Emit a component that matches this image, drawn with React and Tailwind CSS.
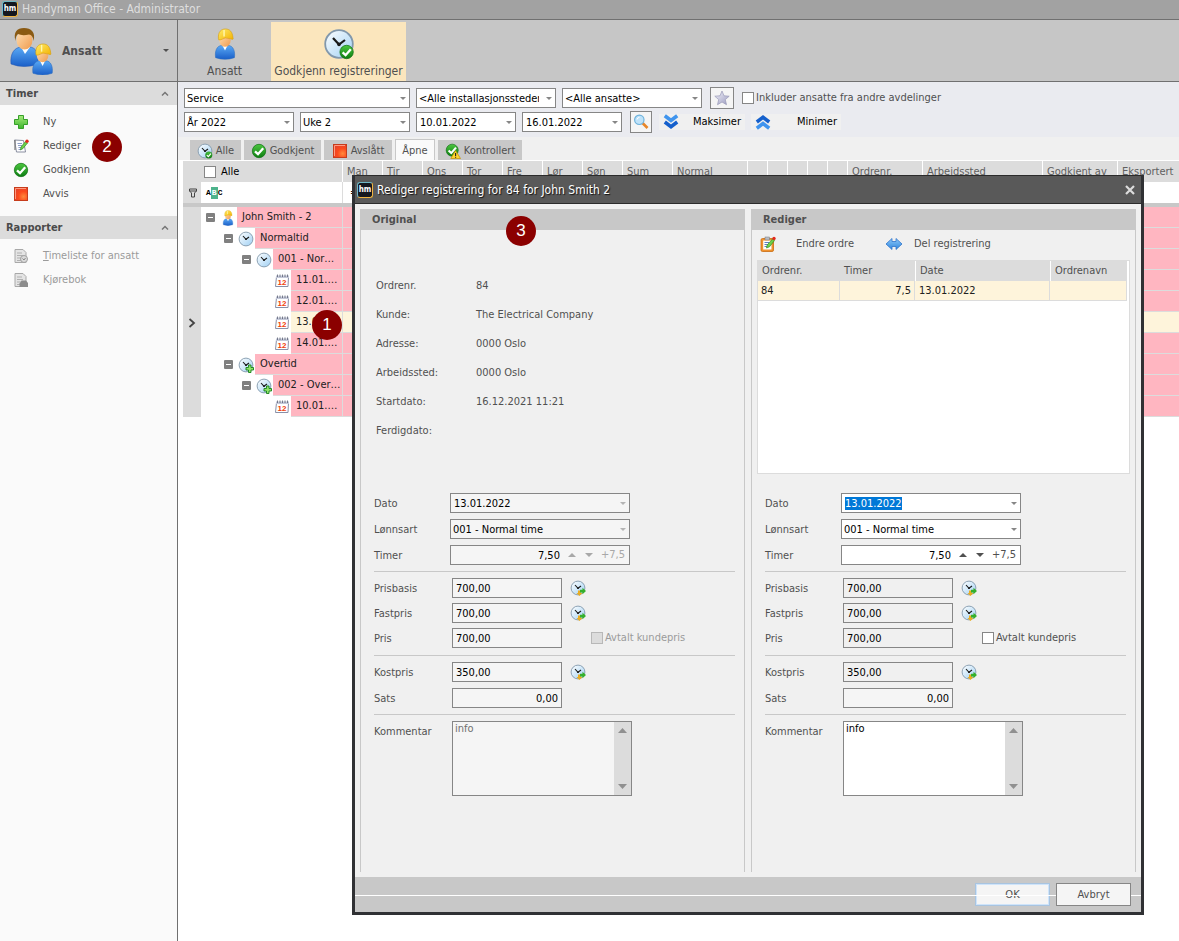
import { useEffect, useRef } from "react";
import clsx from "clsx";

const columns = [
  { label: "Man", width: "w-[40px]", filter: "=" },
  { label: "Tir", width: "w-[40px]" },
  { label: "Ons", width: "w-[40px]" },
  { label: "Tor", width: "w-[40px]" },
  { label: "Fre", width: "w-[40px]" },
  { label: "Lør", width: "w-[40px]" },
  { label: "Søn", width: "w-[40px]" },
  { label: "Sum", width: "w-[50px]" },
  { label: "Normal", width: "w-[75px]" },
  { label: "", width: "w-[20px]" },
  { label: "", width: "w-[20px]" },
  { label: "", width: "w-[20px]" },
  { label: "", width: "w-[20px]" },
  { label: "", width: "w-[20px]" },
  { label: "Ordrenr.", width: "w-[75px]" },
  { label: "Arbeidssted", width: "w-[120px]" },
  { label: "Godkjent av", width: "w-[75px]" },
  { label: "Eksportert", width: "" },
];

const treeRows = [
  { level: 0, icon: "worker", label: "John Smith - 2" },
  { level: 1, icon: "clock", label: "Normaltid" },
  { level: 2, icon: "clock", label: "001 - Nor…" },
  { level: 3, icon: "calendar", label: "11.01.…" },
  { level: 3, icon: "calendar", label: "12.01.…" },
  { level: 3, icon: "calendar", label: "13.01.…", selected: true },
  { level: 3, icon: "calendar", label: "14.01.…" },
  { level: 1, icon: "clockPlus", label: "Overtid" },
  { level: 2, icon: "clockPlus", label: "002 - Over…" },
  { level: 3, icon: "calendar", label: "10.01.…" },
];

const indents = ["pl-0", "pl-[18px]", "pl-[36px]", "pl-[54px]"];

const orderInfo = [
  ["Ordrenr.", "84"],
  ["Kunde:", "The Electrical Company"],
  ["Adresse:", "0000 Oslo"],
  ["Arbeidssted:", "0000 Oslo"],
  ["Startdato:", "16.12.2021 11:21"],
  ["Ferdigdato:", ""],
];

/* ---------- icons ---------- */

function IconDefs() {
  return (
    <svg className="absolute h-0 w-0" aria-hidden="true">
      <defs>
        <linearGradient id="gBlue" x1="0" y1="0" x2="0" y2="1">
          <stop offset="0" stopColor="#5aa9f5" />
          <stop offset="1" stopColor="#1a5fc8" />
        </linearGradient>
        <linearGradient id="gArrow" x1="0" y1="0" x2="0" y2="1">
          <stop offset="0" stopColor="#8cc8fa" />
          <stop offset="1" stopColor="#2f86dc" />
        </linearGradient>
        <linearGradient id="gSkin" x1="0" y1="0" x2="1" y2="1">
          <stop offset="0" stopColor="#ffe0b4" />
          <stop offset="1" stopColor="#ef9a4c" />
        </linearGradient>
        <linearGradient id="gHelmet" x1="0" y1="0" x2="1" y2="1">
          <stop offset="0" stopColor="#ffec6a" />
          <stop offset="1" stopColor="#f2b100" />
        </linearGradient>
        <linearGradient id="gDial" x1="0" y1="0" x2="1" y2="1">
          <stop offset="0" stopColor="#ffffff" />
          <stop offset="1" stopColor="#9fd0f4" />
        </linearGradient>
        <linearGradient id="gGreen" x1="0" y1="0" x2="0" y2="1">
          <stop offset="0" stopColor="#4cc73f" />
          <stop offset="1" stopColor="#0d7d12" />
        </linearGradient>
        <linearGradient id="gPlus" x1="0" y1="0" x2="0" y2="1">
          <stop offset="0" stopColor="#a6ec7c" />
          <stop offset="1" stopColor="#3db52c" />
        </linearGradient>
        <radialGradient id="gRed" cx="0.7" cy="0.7" r="0.8">
          <stop offset="0" stopColor="#ff8a3c" />
          <stop offset="0.5" stopColor="#fb4a1c" />
          <stop offset="1" stopColor="#e4412a" />
        </radialGradient>
        <linearGradient id="gStar" x1="0" y1="0" x2="1" y2="1">
          <stop offset="0" stopColor="#f4f4fa" />
          <stop offset="1" stopColor="#9a9ac0" />
        </linearGradient>
      </defs>
    </svg>
  );
}

function Icon({ size = "size-4", box = "0 0 16 16", children }) {
  return (
    <svg viewBox={box} className={clsx("shrink-0", size)} fill="none" aria-hidden="true">
      {children}
    </svg>
  );
}

function WorkerShape() {
  return (
    <>
      <path d="M1 31.500C0 25 2 18.500 8 18.500L11 20.500L14 18.500C20 18.500 22 25 21 31.500Q11 35 1 31.500Z" fill="url(#gBlue)" stroke="#2a6cc0" strokeWidth=".6" />
      <path d="M8 18L11 24L14 18Z" fill="#fff" />
      <ellipse cx="11" cy="13" rx="6" ry="7" fill="url(#gSkin)" />
      <path d="M4 11C3.500 4 7 1 11.500 1S19 4 19.500 10.500Q20.500 13 17 11.500Q11 9 6.500 12.500Q3.500 13.500 4 11Z" fill="url(#gHelmet)" stroke="#d79b00" strokeWidth=".6" />
      <path d="M10 2V9" stroke="#fff7b0" strokeWidth="1.500" />
    </>
  );
}

function WorkerIcon({ size }) {
  return <Icon size={size} box="-1 0 24 34"><WorkerShape /></Icon>;
}

function PeopleIcon() {
  return (
    <Icon size="h-[48px] w-[44px]" box="0 0 44 48">
      <path d="M1 37C0 27 4 20 12 20L15 23L19 20C27 20 29 28 28 37Q14 42 1 37Z" fill="url(#gBlue)" stroke="#2458b4" strokeWidth=".6" />
      <path d="M11 20L15 27L20 20Z" fill="#fff" />
      <ellipse cx="14.500" cy="13" rx="8" ry="9.500" fill="url(#gSkin)" />
      <path d="M5.500 14C3 5 7 1 14 1S26 5 23.500 14Q23 8 19 7.500Q12 9 8 7Q5.500 9 5.500 14Z" fill="#8a5a12" />
      <g transform="translate(22 16) scale(.96)"><WorkerShape /></g>
    </Icon>
  );
}

function CheckShape() {
  return (
    <>
      <circle cx="8" cy="8" r="6.700" fill="url(#gGreen)" stroke="#0b6d10" strokeWidth=".7" />
      <path d="M4 8.300L7 11.200L12.200 5.200" stroke="#fff" strokeWidth="2.300" />
    </>
  );
}

function CheckIcon({ size }) {
  return <Icon size={size}><CheckShape /></Icon>;
}

function ClockShape() {
  return (
    <>
      <circle cx="8" cy="8" r="6.900" fill="url(#gDial)" stroke="#8298ac" strokeWidth=".9" />
      <path d="M5 5L8 8.300L11 6" stroke="#1a1a1a" strokeWidth="1.100" />
      <circle cx="8" cy="8.200" r=".9" fill="#1a1a1a" />
    </>
  );
}

function ClockIcon({ size, badge }) {
  return (
    <Icon size={size}>
      <ClockShape />
      {badge === "check" && <g transform="translate(7.800 8) scale(.5)"><CheckShape /></g>}
      {badge === "plus" && <path d="M10.500 8H13V10.500H15.500V13H13V15.500H10.500V13H8V10.500H10.500Z" fill="#8fe36a" stroke="#15801a" strokeWidth=".9" />}
      {badge === "arrow" && (
        <>
          <path d="M8 10.500H10.800V13H12.500L9.400 16L6.500 13H8Z" fill="#e9ad22" />
          <path d="M10 9.800H12.500V7.800L16 11L12.500 14.200V12.500H10Z" fill="#35b02c" />
        </>
      )}
    </Icon>
  );
}

function RedSquareIcon() {
  return (
    <Icon>
      <rect x="1.500" y="1.500" width="13" height="13" fill="url(#gRed)" stroke="#c63c1c" />
      <path d="M2.500 13V2.500H13" stroke="#ff9a80" />
    </Icon>
  );
}

function PlusIcon() {
  return (
    <Icon>
      <path d="M5.500 1.500H10.500V5.500H14.500V10.500H10.500V14.500H5.500V10.500H1.500V5.500H5.500Z" fill="url(#gPlus)" stroke="#36a02a" />
    </Icon>
  );
}

function EditIcon() {
  return (
    <Icon>
      <path d="M1.500 2L10.500 2.500L12.500 14H3.500Z" fill="#fdfdff" stroke="#8a8fa0" />
      <path d="M2 2V12" stroke="#777" strokeWidth="1.200" />
      <path d="M4.500 5.500H9M5 7.500H9M5.500 9.500H8M5.500 11.500H8" stroke="#6d84b8" strokeWidth=".8" />
      <path d="M7.500 12L8 9L12.500 3.500L14.500 5L10 10.500Z" fill="#6fd04a" stroke="#2f8f22" strokeWidth=".7" />
      <circle cx="14" cy="3.200" r="1.700" fill="#e22a1c" />
    </Icon>
  );
}

function ClipboardIcon() {
  return (
    <Icon>
      <rect x="1" y="2.500" width="12.500" height="13" rx="1.500" fill="#f0922e" stroke="#c96c10" strokeWidth=".8" />
      <path d="M3.200 4.500H11.500V13.500H3.200Z" fill="#fff" />
      <rect x="5" y="1" width="4.500" height="3" fill="#b9bcc4" stroke="#777" strokeWidth=".5" />
      <path d="M4.500 6.500H9M4.500 8.500H8M4.500 10.500H7" stroke="#5f7fc0" />
      <path d="M6.500 12L7.200 9L12.500 3L14.500 4.500L9.500 10.800Z" fill="#6fd04a" stroke="#2f8f22" strokeWidth=".7" />
      <circle cx="14" cy="2.500" r="1.700" fill="#e22a1c" />
    </Icon>
  );
}

function SplitIcon() {
  return (
    <Icon>
      <path d="M0 8L6 2.500V5.500H10V2.500L16 8L10 13.500V10.500H6V13.500Z" fill="url(#gArrow)" stroke="#2f74cc" strokeWidth=".8" />
    </Icon>
  );
}

function CalendarIcon() {
  return (
    <Icon>
      <path d="M2.500 3.500H14.500L14 13.500H1.500Z" fill="#fff" stroke="#8a90a8" />
      <path d="M2 2.500H15V5H2Z" fill="#c4c8d8" />
      <path d="M3.500 1.500V4M6 1.500V4M8.500 1.500V4M11 1.500V4M13.500 1.500V4" stroke="#5a5f74" strokeWidth=".8" />
      <text x="8" y="12.300" fontSize="8" fontWeight="700" fontFamily="Liberation Sans" textAnchor="middle" fill="#f0400a">12</text>
    </Icon>
  );
}

function ControlledIcon() {
  return (
    <Icon>
      <g transform="scale(.9)"><CheckShape /></g>
      <path d="M10.500 7.500L15.500 15.500H5.800Z" fill="#ffd52e" stroke="#c09000" strokeWidth=".7" />
      <path d="M10.600 10V13M10.600 13.700V14.700" stroke="#222" strokeWidth="1.100" />
    </Icon>
  );
}

function StarIcon() {
  return (
    <Icon>
      <path d="M8 1L10 5.800L15.200 6.200L11.300 9.600L12.500 14.700L8 12L3.500 14.700L4.700 9.600L.8 6.200L6 5.800Z" fill="url(#gStar)" stroke="#9a9ab8" strokeWidth=".7" />
    </Icon>
  );
}

function SearchIcon() {
  return (
    <Icon>
      <path d="M9.500 9L14.500 14" stroke="#e8862a" strokeWidth="2.600" />
      <circle cx="6.300" cy="5.800" r="4.700" fill="#bfe3fa" stroke="#6fb3dc" strokeWidth="1.200" />
      <path d="M4 5.500Q4.500 3.500 6.500 3.300" stroke="#fff" />
    </Icon>
  );
}

function ChevronsIcon({ up }) {
  return (
    <Icon>
      <g transform={up ? "rotate(180 8 8)" : undefined} strokeWidth="3.600">
        <path d="M1.800 1.800L8 6.500L14.200 1.800" stroke="#3f94ee" />
        <path d="M1.800 8L8 12.700L14.200 8" stroke="#1560cc" />
      </g>
    </Icon>
  );
}

function ReportIcon({ car }) {
  return (
    <Icon>
      <path d="M2 1.500H10L13 4.500V14.500H2Z" fill="#e4e4e4" stroke="#a8a8a8" />
      <path d="M4 5H9M4 7.500H10M4 10H8M4 12.500H8" stroke="#b0b0b0" />
      {car ? (
        <path d="M7 11L8.500 8.500H13L15 11V15H6.500V11Z" fill="#8c8c8c" />
      ) : (
        <>
          <circle cx="11" cy="11" r="3.500" fill="#dadada" stroke="#a0a0a0" />
          <path d="M9.500 10.500L11 12L12.500 10" stroke="#888" />
        </>
      )}
    </Icon>
  );
}

function FilterIcon() {
  return (
    <Icon size="size-2.5" box="0 0 10 10">
      <path d="M1.500 1H8.500V3L6.500 5V9H3.500V5L1.500 3ZM1.500 3H8.500" stroke="#444" />
    </Icon>
  );
}

function Triangle({ up, className, size = "h-[4px] w-[8px]" }) {
  return (
    <svg viewBox="0 0 8 4" preserveAspectRatio="none" className={clsx("pointer-events-none shrink-0", size, className)} aria-hidden="true">
      <path d={up ? "M0 4L4 0L8 4Z" : "M0 0L4 4L8 0Z"} fill="currentColor" />
    </svg>
  );
}

function Logo() {
  return (
    <span className="flex size-4 shrink-0 items-center justify-center rounded-[3px] border border-t-[#6fb7c4] border-r-[#f0b440] border-b-[#f0b440] border-l-[#6fb7c4] bg-[#14171f] text-[8px] leading-none font-bold text-white">
      hm
    </span>
  );
}

const treeIcons = {
  worker: <WorkerIcon size="size-4" />,
  clock: <ClockIcon />,
  clockPlus: <ClockIcon badge="plus" />,
  calendar: <CalendarIcon />,
};

/* ---------- controls ---------- */

function Select({ label, value, id, disabled, className }) {
  return (
    <span className={clsx("relative flex h-5 items-center border border-[#868686]", disabled ? "bg-[#f5f5f5]" : "bg-white", className)}>
      <select id={id} aria-label={label} disabled={disabled} defaultValue={value} className="h-full w-full appearance-none overflow-hidden bg-transparent pt-px pr-4 pl-[2px] text-black outline-none disabled:opacity-100">
        <option>{value}</option>
      </select>
      <Triangle className={clsx("absolute right-[3px]", disabled ? "text-[#b4b4b4]" : "text-[#868686]")} size="h-[3px] w-[6px]" />
    </span>
  );
}

function DateField({ id, label, value, disabled, inputRef, className }) {
  return (
    <span className={clsx("flex h-5 items-center border border-[#868686]", disabled ? "bg-[#f5f5f5]" : "bg-white", className)}>
      <input id={id} ref={inputRef} aria-label={label} defaultValue={value} disabled={disabled} className="h-full min-w-0 flex-1 bg-transparent pl-[3px] text-black outline-none selection:bg-[#0078d7] selection:text-white" />
      <button type="button" aria-label="Åpne kalender" disabled={disabled} className="flex h-full items-center pr-[3px]">
        <Triangle className={disabled ? "text-[#b4b4b4]" : "text-[#868686]"} size="h-[3px] w-[6px]" />
      </button>
    </span>
  );
}

function CheckBox({ label, disabled, dark, className }) {
  return (
    <label className={clsx("flex items-center", disabled ? "text-[#9b9b9b]" : dark ? "text-black" : "text-[#505050]", className)}>
      <input type="checkbox" disabled={disabled} className={clsx("size-3 shrink-0 appearance-none border", disabled ? "border-[#b8b8b8] bg-[#dcdcdc]" : "border-[#868686] bg-white")} />
      {label}
    </label>
  );
}

function Marker({ children, className }) {
  return (
    <span className={clsx("absolute flex size-[30px] items-center justify-center rounded-full bg-[#8b0000] font-['Liberation_Sans',Arial,sans-serif] text-[17px] text-white", className)}>
      {children}
    </span>
  );
}

/* ---------- main window ---------- */

function TopBar() {
  return (
    <header className="flex h-[62px] border-b border-[#707070] bg-[#c6c6c6] text-[12px]">
      <button className="flex w-[178px] items-center border-r border-[#707070] pr-2 pl-[10px] text-left font-bold text-[#505050]">
        <PeopleIcon />
        <span className="flex-1 pl-2">Ansatt</span>
        <Triangle size="h-[3px] w-[6px]" />
      </button>
      <button className="flex w-[93px] flex-col items-center justify-end pb-[3px] text-[#505050]">
        <WorkerIcon size="size-8" />
        <span className="mt-1">Ansatt</span>
      </button>
      <button className="mt-[2px] flex w-[135px] flex-col items-center justify-end bg-[#fbe6bd] pb-[3px] whitespace-nowrap text-[#505050]">
        <ClockIcon size="size-8" badge="check" />
        <span className="mt-1">Godkjenn registreringer</span>
      </button>
    </header>
  );
}

function NavGroup({ title, children }) {
  return (
    <section>
      <h2 className="flex h-[23px] items-center justify-between bg-[#dcdcdc] pr-2 pl-[6px] font-bold text-[#4a4a4a]">
        {title}
        <svg viewBox="0 0 8 5" className="h-[5px] w-2" aria-hidden="true">
          <path d="M1 4.500L4 1.500L7 4.500" fill="none" stroke="#777" strokeWidth="1.500" />
        </svg>
      </h2>
      <ul className="pt-[5px] pb-[10px]">{children}</ul>
    </section>
  );
}

function NavItem({ icon, label, disabled, children }) {
  return (
    <li className="relative">
      <button disabled={disabled} className={clsx("flex h-6 w-full items-center gap-[14px] pl-[13px]", disabled ? "text-[#9b9b9b]" : "text-[#505050]")}>
        {icon}
        {label}
      </button>
      {children}
    </li>
  );
}

function Sidebar() {
  return (
    <nav className="w-[178px] shrink-0 border-r border-[#707070] bg-[#fafafa]">
      <NavGroup title="Timer">
        <NavItem icon={<PlusIcon />} label="Ny" />
        <NavItem icon={<EditIcon />} label="Rediger">
          <Marker className="-top-[2px] left-[92px]">2</Marker>
        </NavItem>
        <NavItem icon={<CheckIcon />} label="Godkjenn" />
        <NavItem icon={<RedSquareIcon />} label="Avvis" />
      </NavGroup>
      <NavGroup title="Rapporter">
        <NavItem icon={<ReportIcon />} label={<span><u>T</u>imeliste for ansatt</span>} disabled />
        <NavItem icon={<ReportIcon car />} label="Kjørebok" disabled />
      </NavGroup>
    </nav>
  );
}

function Filters() {
  return (
    <div className="flex flex-col gap-1 bg-[#eaebf0] pt-[6px] pb-[5px] pl-[6px]">
      <div className="flex h-5 items-center gap-[6px]">
        <Select label="Avdeling" value="Service" className="w-[226px]" />
        <Select label="Installasjonssted" value="<Alle installasjonssteder>" className="w-[140px]" />
        <Select label="Ansatt" value="<Alle ansatte>" className="w-[140px]" />
        <button aria-label="Favoritt" className="ml-[2px] flex h-[22px] w-6 items-center justify-center border border-[#868686] bg-[#f5f5f5]">
          <StarIcon />
        </button>
        <CheckBox label="Inkluder ansatte fra andre avdelinger" className="ml-[2px] gap-[2px]" />
      </div>
      <div className="flex h-5 items-center gap-[6px]">
        <Select label="År" value="År 2022" className="w-[110px]" />
        <Select label="Uke" value="Uke 2" className="w-[110px]" />
        <DateField label="Fra dato" value="10.01.2022" className="w-[100px]" />
        <DateField label="Til dato" value="16.01.2022" className="w-[100px]" />
        <button aria-label="Søk" className="ml-[2px] flex size-[22px] items-center justify-center border border-[#868686] bg-[#f5f5f5]">
          <SearchIcon />
        </button>
        <button className="ml-[1px] flex w-[86px] items-center justify-between bg-[#f0f0f0] px-1 text-black">
          <ChevronsIcon />
          Maksimer
        </button>
        <button className="flex w-[90px] items-center justify-between bg-[#f0f0f0] px-1 text-black">
          <ChevronsIcon up />
          Minimer
        </button>
      </div>
    </div>
  );
}

function Tab({ icon, label, active, width }) {
  return (
    <button
      role="tab"
      aria-selected={!!active}
      className={clsx("flex items-center justify-center gap-[3px] pt-px text-[#505050]", width, active ? "h-[21px] border border-b-0 border-[#c8c8c8] bg-[#fafafa]" : "h-5 bg-[#c8c8c8]")}
    >
      {icon}
      {label}
    </button>
  );
}

function Tabs() {
  return (
    <div role="tablist" className="flex h-[23px] items-end gap-[3px] bg-[#f0f0f0] pl-3">
      <Tab icon={<ClockIcon badge="check" />} label="Alle" width="w-[51px]" />
      <Tab icon={<CheckIcon />} label="Godkjent" width="w-[77px]" />
      <Tab icon={<RedSquareIcon />} label="Avslått" width="w-[68px]" />
      <Tab label="Åpne" active width="w-[40px]" />
      <Tab icon={<ControlledIcon />} label="Kontrollert" width="w-[84px]" />
    </div>
  );
}

function TreeCell({ row }) {
  return (
    <div className={clsx("flex h-[21px] items-center", indents[row.level])}>
      <span className="flex w-[18px] shrink-0 items-center justify-center">
        {row.level < 3 && (
          <button aria-label="Skjul" className="flex size-[9px] items-center justify-center rounded-[1px] bg-[#808080]">
            <span className="h-px w-[5px] bg-white" />
          </button>
        )}
      </span>
      <span className="flex w-[18px] shrink-0 justify-center">{treeIcons[row.icon]}</span>
      <span className={clsx("h-full min-w-0 flex-1 overflow-hidden border-b border-[#dcdcdc] pl-[5px] leading-5 whitespace-nowrap text-[#202020]", row.selected ? "bg-[#fef4db]" : "bg-[#ffb6c1]")}>
        {row.label}
      </span>
    </div>
  );
}

function RegistrationGrid() {
  return (
    <div className="border-t border-l border-white pl-1">
      <table className="w-full table-fixed border-separate border-spacing-0">
        <colgroup>
          <col className="w-[18px]" />
          <col className="w-[141px]" />
          {columns.map((c, i) => <col key={i} className={c.width} />)}
        </colgroup>
        <thead>
          <tr className="h-[21px] bg-[#dcdcdc] text-left text-[#606060]">
            <th />
            <th className="p-0 font-normal"><CheckBox label="Alle" dark className="gap-[5px] pl-[3px]" /></th>
            {columns.map((c, i) => (
              <th key={i} className="overflow-hidden border-l border-white p-0 pl-1 font-normal whitespace-nowrap">{c.label}</th>
            ))}
          </tr>
          <tr className="h-[21px] bg-white">
            <td className="bg-[#dcdcdc] p-0 pl-[5px]"><FilterIcon /></td>
            <td className="p-0 pl-[5px]">
              <span className="flex items-center font-['Liberation_Mono',monospace] text-[8px] leading-none font-bold text-black">
                A<span className="bg-[#4db38c] px-px py-[2px] text-white">B</span>C
              </span>
            </td>
            {columns.map((c, i) => (
              <td key={i} className="border-l border-[#dcdcdc] p-0 pl-[7px]">{c.filter}</td>
            ))}
          </tr>
        </thead>
        <tbody>
          <tr className="h-1"><td colSpan={20} className="bg-[#c8c8c8] p-0" /></tr>
          {treeRows.map((row, i) => (
            <tr key={i}>
              <td className="bg-[#dcdcdc] p-0">
                {row.selected && (
                  <svg viewBox="0 0 8 10" className="mx-auto h-[10px] w-2" aria-hidden="true">
                    <path d="M1.500 1L6 5L1.500 9" fill="none" stroke="#444" strokeWidth="1.800" />
                  </svg>
                )}
              </td>
              <td className="p-0"><TreeCell row={row} /></td>
              {columns.map((c, j) => (
                <td key={j} className={clsx("border-b border-l border-[#dcdcdc] p-0", row.selected ? "bg-[#fef4db]" : "bg-[#ffb6c1]")} />
              ))}
            </tr>
          ))}
        </tbody>
      </table>
    </div>
  );
}

/* ---------- edit dialog ---------- */

function Panel({ title, children }) {
  return (
    <section className="min-w-0 flex-1 border-x border-[#c8c8c8]">
      <h3 className="h-[21px] bg-[#c8c8c8] pl-[11px] leading-[22px] font-bold text-[#505050]">{title}</h3>
      {children}
    </section>
  );
}

function Field({ id, label, labelWidth = "w-[76px]", children }) {
  return (
    <div className="flex h-5 items-center">
      <label htmlFor={id} className={clsx("shrink-0 pt-[2px]", labelWidth)}>{label}</label>
      {children}
    </div>
  );
}

function Amount({ id, label, value, right, background = "bg-[#f5f5f5]", withClock, children }) {
  return (
    <Field id={id} label={label} labelWidth="w-[78px]">
      <input id={id} readOnly defaultValue={value} className={clsx("h-5 w-[110px] border border-[#868686] px-[3px] text-black outline-none", background, right && "text-right")} />
      {withClock && (
        <button type="button" aria-label={`Hent ${label}`} className="ml-2">
          <ClockIcon badge="arrow" />
        </button>
      )}
      {children}
    </Field>
  );
}

function RegistrationForm({ prefix, disabled, dateRef }) {
  const priceBg = disabled ? "bg-[#f5f5f5]" : "bg-[#f0f0f0]";
  return (
    <form className="pr-[9px] pl-[13px] text-[#505050]" onSubmit={(e) => e.preventDefault()}>
      <div className="flex flex-col gap-[6px]">
        <Field id={`${prefix}-date`} label="Dato">
          <DateField id={`${prefix}-date`} inputRef={dateRef} value="13.01.2022" disabled={disabled} className="w-[180px]" />
        </Field>
        <Field id={`${prefix}-wage`} label="Lønnsart">
          <Select id={`${prefix}-wage`} value="001 - Normal time" disabled={disabled} className="w-[180px]" />
        </Field>
        <Field id={`${prefix}-hours`} label="Timer">
          <span className={clsx("flex h-5 w-[180px] items-center border border-[#868686] pr-1", disabled ? "bg-[#f5f5f5] text-[#a8a8a8]" : "bg-white text-[#505050]")}>
            <input id={`${prefix}-hours`} defaultValue="7,50" disabled={disabled} className="h-full min-w-0 flex-1 bg-transparent text-right text-black outline-none" />
            <button type="button" aria-label="Øk" disabled={disabled} className="ml-2"><Triangle up /></button>
            <button type="button" aria-label="Reduser" disabled={disabled} className="ml-[9px]"><Triangle /></button>
            <button type="button" disabled={disabled} className="ml-2">+7,5</button>
          </span>
        </Field>
      </div>
      <hr className="my-[6px] border-[#c8c8c8]" />
      <div className="flex flex-col gap-[5px]">
        <Amount id={`${prefix}-base`} label="Prisbasis" value="700,00" withClock background={priceBg} />
        <Amount id={`${prefix}-fixed`} label="Fastpris" value="700,00" withClock background={priceBg} />
        <Amount id={`${prefix}-price`} label="Pris" value="700,00" background={priceBg}>
          <CheckBox label="Avtalt kundepris" disabled={disabled} className="ml-[29px] gap-[2px]" />
        </Amount>
      </div>
      <hr className="mt-[7px] mb-[6px] border-[#c8c8c8]" />
      <div className="flex flex-col gap-[6px]">
        <Amount id={`${prefix}-cost`} label="Kostpris" value="350,00" withClock background={priceBg} />
        <Amount id={`${prefix}-rate`} label="Sats" value="0,00" right />
      </div>
      <hr className="my-[6px] border-[#c8c8c8]" />
      <div className="flex">
        <label htmlFor={`${prefix}-comment`} className="w-[78px] shrink-0 pt-1">Kommentar</label>
        <div className="flex h-[75px] w-[180px] border border-[#868686]">
          <textarea id={`${prefix}-comment`} defaultValue="info" disabled={disabled} className={clsx("min-w-0 flex-1 resize-none px-[2px] outline-none", disabled ? "bg-[#f5f5f5] text-[#707070]" : "bg-white text-black")} />
          <div className="flex w-[17px] flex-col items-center justify-between bg-[#dcdcdc] py-[6px] text-[#909090]">
            <Triangle up size="h-[5px] w-[9px]" />
            <Triangle size="h-[5px] w-[9px]" />
          </div>
        </div>
      </div>
    </form>
  );
}

function OrdersTable() {
  return (
    <div className="h-[214px] border border-[#dcdcdc] bg-white pr-[2px]">
      <table className="w-full table-fixed border-separate border-spacing-0 text-left">
        <colgroup>
          <col className="w-[82px]" />
          <col className="w-[75px]" />
          <col className="w-[135px]" />
          <col />
        </colgroup>
        <thead>
          <tr className="h-[20px] bg-[#dcdcdc] text-[#505050]">
            <th className="p-0 pl-1 font-normal">Ordrenr.</th>
            <th className="p-0 pl-1 font-normal">Timer</th>
            <th className="border-l border-white p-0 pl-1 font-normal">Date</th>
            <th className="border-l border-white p-0 pl-1 font-normal">Ordrenavn</th>
          </tr>
        </thead>
        <tbody>
          <tr className="h-[20px] bg-[#fef4db] text-[#202020]">
            <td className="border-r border-b border-[#dcdcdc] p-0 pl-[3px]">84</td>
            <td className="border-r border-b border-[#dcdcdc] p-0 pr-[3px] text-right">7,5</td>
            <td className="border-r border-b border-[#dcdcdc] p-0 pl-1">13.01.2022</td>
            <td className="border-r border-b border-[#dcdcdc] p-0" />
          </tr>
        </tbody>
      </table>
    </div>
  );
}

function EditDialog() {
  const dateRef = useRef(null);

  useEffect(() => {
    dateRef.current.focus();
    dateRef.current.select();
  }, []);

  return (
    <div role="dialog" aria-label="Rediger registrering" className="absolute top-[175px] right-[35px] left-[352px] border-3 border-t-0 border-[#303134] bg-[#f0f0f0]">
      <div className="flex h-[29px] items-center gap-1 border-y border-[#2b2b2b] bg-[#595959] pr-[6px] pl-[2px] text-[12px] text-white">
        <Logo />
        <h2 className="flex-1 text-shadow-[1px_1px_1px_#111]">Rediger registrering for 84 for John Smith 2</h2>
        <button aria-label="Lukk">
          <svg viewBox="0 0 10 10" className="size-[10px]"><path d="M1 1L9 9M9 1L1 9" stroke="#dcdcdc" strokeWidth="2.200" /></svg>
        </button>
      </div>
      <div className="flex gap-[6px] p-[5px]">
        <Panel title="Original">
          <div className="h-[263px] pt-[41px] pl-[15px] text-[#505050]">
            <dl>
              {orderInfo.map(([label, value]) => (
                <div key={label} className="flex h-[29px] items-center">
                  <dt className="w-[100px]">{label}</dt>
                  <dd>{value}</dd>
                </div>
              ))}
            </dl>
          </div>
          <RegistrationForm prefix="original" disabled />
        </Panel>
        <Panel title="Rediger">
          <div className="flex h-[263px] flex-col px-[5px] pt-[2px]">
            <div className="flex h-6 items-center text-[#505050]">
              <button className="flex items-center gap-5 pl-[3px]"><ClipboardIcon />Endre ordre</button>
              <button className="flex items-center gap-3 pl-8"><SplitIcon />Del registrering</button>
            </div>
            <div className="pt-1"><OrdersTable /></div>
          </div>
          <RegistrationForm prefix="edit" dateRef={dateRef} />
          <div className="h-[76px]" />
        </Panel>
      </div>
      <div className="relative flex h-[35px] items-center justify-end gap-[6px] bg-[#c8c8c8] pr-[10px] text-[#505050]">
        <button className="h-[23px] w-[75px] border border-[#a8c4e0] bg-[#f5f5f5] shadow-[inset_0_0_0_1px_#cfe4fa]">OK</button>
        <span className="absolute inset-x-0 top-[18px] h-px bg-white" />
        <button className="relative h-[23px] w-[75px] border border-[#868686] bg-[#f5f5f5]">Avbryt</button>
      </div>
      <Marker className="top-[41px] left-[151px]">3</Marker>
    </div>
  );
}

export default function App() {
  return (
    <div className="relative flex min-h-screen flex-col overflow-hidden bg-white font-['DejaVu_Sans_Condensed','DejaVu_Sans',sans-serif] text-[11px] leading-[14px]">
      <IconDefs />
      <div className="flex h-5 items-center gap-1 border-b border-[#707070] bg-[#a2a2a2] pb-[2px] pl-[2px] text-[12px] text-[#dedede]">
        <Logo />
        <h1>Handyman Office - Administrator</h1>
      </div>
      <TopBar />
      <div className="flex flex-1">
        <Sidebar />
        <main className="min-w-0 flex-1">
          <Filters />
          <Tabs />
          <RegistrationGrid />
        </main>
      </div>
      <EditDialog />
      <Marker className="top-[310px] left-[312px]">1</Marker>
    </div>
  );
}
